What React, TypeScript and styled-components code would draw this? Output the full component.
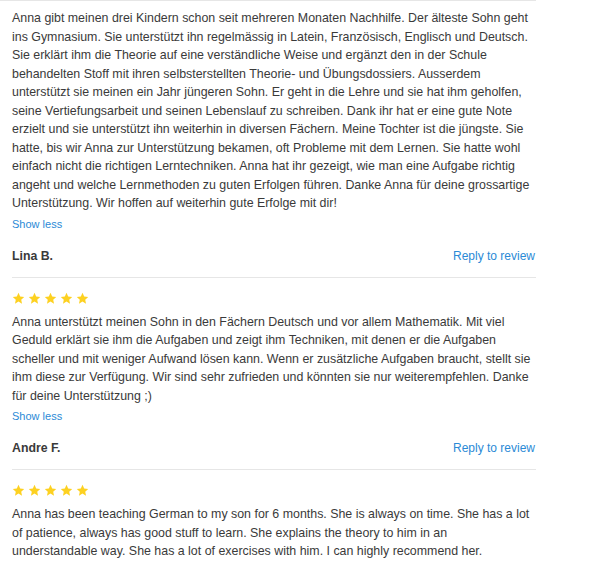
import React from "react";
import styled, { createGlobalStyle } from "styled-components";

const Global = createGlobalStyle`
  html, body { margin: 0; padding: 0; background: #fff; }
  body { font-family: "Liberation Sans", Arial, sans-serif; }
`;

const Page = styled.div`
  border-top: 1px solid #e6e6e6;
  padding: 8px 0 0 12px;
  width: 524px;
`;

const Review = styled.article`
  display: flex;
  flex-direction: column;
`;

const Stars = styled.div`
  display: flex;
  gap: 3px;
  margin: 14px 0 8px 0;
  height: 13px;
`;

const Body = styled.p<{ $collapsed?: boolean }>`
  margin: 0;
  font-size: 12.4px;
  line-height: 18.5px;
  color: #3a3a3a;
  max-width: ${(p) => (p.$collapsed ? "522px" : "none")};
`;

const ToggleLink = styled.a`
  display: block;
  margin-top: 2px;
  font-size: 11px;
  line-height: 18px;
  color: #2b8ad6;
  cursor: pointer;
`;

const Footer = styled.div`
  display: flex;
  justify-content: space-between;
  align-items: center;
  margin-top: 14px;
  padding-bottom: 12px;
  border-bottom: 1px solid #e6e6e6;
  line-height: 18px;
`;

const Author = styled.span`
  font-size: 12.3px;
  font-weight: bold;
  color: #3a3a3a;
`;

const ReplyLink = styled.a`
  font-size: 12px;
  color: #2b8ad6;
  margin-right: 1px;
  cursor: pointer;
`;

const Star = () => (
  <svg width="13" height="13" viewBox="0 0 24 24">
    <polygon
      points="12,1.5 15.1,8.3 22.5,9.1 17,14.1 18.5,21.5 12,17.7 5.5,21.5 7,14.1 1.5,9.1 8.9,8.3"
      fill="#fdd121"
    />
  </svg>
);

type R = { stars: boolean; text: string; author?: string; toggle?: boolean };

const reviews: R[] = [
  {
    stars: false,
    text:
      "Anna gibt meinen drei Kindern schon seit mehreren Monaten Nachhilfe. Der älteste Sohn geht ins Gymnasium. Sie unterstützt ihn regelmässig in Latein, Französisch, Englisch und Deutsch. Sie erklärt ihm die Theorie auf eine verständliche Weise und ergänzt den in der Schule behandelten Stoff mit ihren selbsterstellten Theorie- und Übungsdossiers. Ausserdem unterstützt sie meinen ein Jahr jüngeren Sohn. Er geht in die Lehre und sie hat ihm geholfen, seine Vertiefungsarbeit und seinen Lebenslauf zu schreiben. Dank ihr hat er eine gute Note erzielt und sie unterstützt ihn weiterhin in diversen Fächern. Meine Tochter ist die jüngste. Sie hatte, bis wir Anna zur Unterstützung bekamen, oft Probleme mit dem Lernen. Sie hatte wohl einfach nicht die richtigen Lerntechniken. Anna hat ihr gezeigt, wie man eine Aufgabe richtig angeht und welche Lernmethoden zu guten Erfolgen führen. Danke Anna für deine grossartige Unterstützung. Wir hoffen auf weiterhin gute Erfolge mit dir!",
    author: "Lina B.",
    toggle: true,
  },
  {
    stars: true,
    text:
      "Anna unterstützt meinen Sohn in den Fächern Deutsch und vor allem Mathematik. Mit viel Geduld erklärt sie ihm die Aufgaben und zeigt ihm Techniken, mit denen er die Aufgaben scheller und mit weniger Aufwand lösen kann. Wenn er zusätzliche Aufgaben braucht, stellt sie ihm diese zur Verfügung. Wir sind sehr zufrieden und könnten sie nur weiterempfehlen. Danke für deine Unterstützung ;)",
    author: "Andre F.",
    toggle: true,
  },
  {
    stars: true,
    text:
      "Anna has been teaching German to my son for 6 months. She is always on time. She has a lot of patience, always has good stuff to learn. She explains the theory to him in an understandable way. She has a lot of exercises with him. I can highly recommend her.",
  },
];

export default function App() {
  return (
    <>
      <Global />
      <Page>
        {reviews.map((r, i) => (
          <Review key={i}>
            {r.stars && (
              <Stars>
                {[0, 1, 2, 3, 4].map((s) => (
                  <Star key={s} />
                ))}
              </Stars>
            )}
            <Body $collapsed={!r.toggle}>{r.text}</Body>
            {r.toggle && <ToggleLink>Show less</ToggleLink>}
            {r.author && (
              <Footer>
                <Author>{r.author}</Author>
                <ReplyLink>Reply to review</ReplyLink>
              </Footer>
            )}
          </Review>
        ))}
      </Page>
    </>
  );
}
